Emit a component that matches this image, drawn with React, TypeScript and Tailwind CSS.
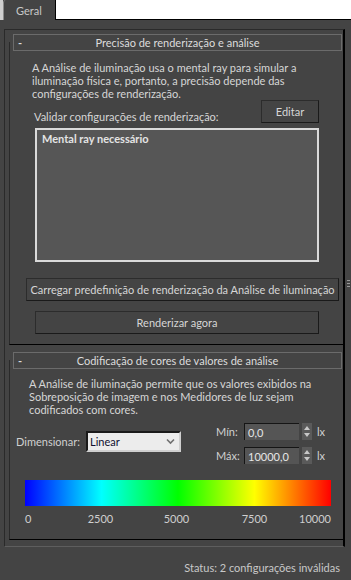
import React from 'react';

const font = { fontFamily: 'Lato, "Liberation Sans", sans-serif' };

function RolloutTitle({ title }: { title: string }) {
    return (
        <div className="relative -mt-[8px] ml-[3px] mr-[1px] h-[17px] border border-[#6b6b6b] bg-[#444] flex items-center text-[#dcdcdc]">
            <span className="w-[16px] pl-[4px] font-bold">-</span>
            <span className="flex-1 text-center pr-[16px]">{title}</span>
        </div>
    );
}

function Button({ label, className }: { label: string; className: string }) {
    return (
        <div className={`h-[23px] flex items-center justify-center whitespace-nowrap bg-[#444] border border-[#2c2c2c] border-b-[#1a1a1a] border-r-[#1a1a1a] text-[#d6d6d6] ${className}`}>
            {label}
        </div>
    );
}

function Spinner() {
    return (
        <div className="ml-[3px] w-[10px] h-[17px] bg-[#5a5a5a] flex flex-col items-center justify-center gap-[3px]">
            <div className="w-0 h-0 border-l-[3px] border-r-[3px] border-b-[4px] border-l-transparent border-r-transparent border-b-[#c8c8c8]" />
            <div className="w-0 h-0 border-l-[3px] border-r-[3px] border-t-[4px] border-l-transparent border-r-transparent border-t-[#c8c8c8]" />
        </div>
    );
}

function NumField({ label, value }: { label: string; value: string }) {
    return (
        <div className="flex items-center h-[17px]">
            <span className="w-[28px] text-[#d0d0d0]">{label}</span>
            <div className="w-[55px] h-[17px] bg-[#555] border-t border-l border-[#151515] border-b-[#5c5c5c] border-r-[#5c5c5c] pl-[3px] text-[#e6e6e6] flex items-center">
                {value}
            </div>
            <Spinner />
            <span className="ml-[5px] text-[#d0d0d0]">lx</span>
        </div>
    );
}

export default function App() {
    return (
        <div className="w-[351px] h-[580px] bg-[#444] overflow-hidden text-[11px] leading-[13px]" style={font}>
            {/* tab strip */}
            <div className="h-[20px] flex">
                <div className="w-[3px] bg-[#cfcfcf]" />
                <div className="w-[53px] h-[20px] bg-[#444] border-l border-r border-l-[#8a8a8a] border-r-black rounded-tl-[3px] flex items-center pl-[12px] text-[#c8c8c8]">
                    Geral
                </div>
                <div className="flex-1 bg-white border-b border-black" />
            </div>

            <div className="flex">
                <div className="w-[4px]" />
                {/* outer frame */}
                <div className="mt-[9px] w-[341px] border-l border-t border-b border-[#2a2a2a] border-b-[#5e5e5e] border-r-2 border-r-black pb-[6px]">
                    {/* Rollout 1 */}
                    <div className="mt-[12px] ml-[4px] flex flex-col border-l border-b border-l-[#2a2a2a] border-b-black">
                        <RolloutTitle title="Precisão de renderização e análise" />
                        <div className="mt-[10px] pl-[22px] text-[#d6d6d6]">
                            <div>A Análise de iluminação usa o mental ray para simular a</div>
                            <div>iluminação física e, portanto, a precisão depende das</div>
                            <div>configurações de renderização.</div>
                        </div>
                        <div className="h-[23px] flex items-end justify-between pl-[24px] pr-[24px] text-[#d6d6d6]">
                            <span>Validar configurações de renderização:</span>
                            <Button label="Editar" className="w-[58px]" />
                        </div>
                        <div className="mt-[5px] ml-[25px] w-[284px] h-[134px] border-2 border-[#dadada] bg-[#565656] pl-[5px] pt-[2px] font-bold text-[#e4e4e4]">
                            Mental ray necessário
                        </div>
                        <Button label="Carregar predefinição de renderização da Análise de iluminação" className="mt-[16px] ml-[16px] w-[313px]" />
                        <Button label="Renderizar agora" className="mt-[10px] ml-[25px] w-[284px]" />
                        <div className="h-[10px]" />
                    </div>

                    {/* Rollout 2 */}
                    <div className="mt-[15px] ml-[4px] flex flex-col border-l border-b border-l-[#2a2a2a] border-b-black">
                        <RolloutTitle title="Codificação de cores de valores de análise" />
                        <div className="mt-[8px] pl-[19px] text-[#d6d6d6]">
                            <div>A Análise de iluminação permite que os valores exibidos na</div>
                            <div>Sobreposição de imagem e nos Medidores de luz sejam</div>
                            <div>codificados com cores.</div>
                        </div>
                        <div className="mt-[7px] flex items-start">
                            <div className="mt-[8px] ml-[6px] flex items-center">
                                <span className="w-[70px] text-[#d0d0d0]">Dimensionar:</span>
                                <div className="w-[95px] h-[21px] bg-[#ececec] border-2 border-t-[#1a1a1a] border-l-[#1a1a1a] border-b-[#cfcfcf] border-r-[#cfcfcf] flex items-center justify-between pl-[2px] pr-[4px] text-[#101030]">
                                    <span>Linear</span>
                                    <svg width="9" height="7" viewBox="0 0 9 7">
                                        <path d="M1 1.5 L4.5 5 L8 1.5" stroke="#707070" strokeWidth="1.6" fill="none" />
                                    </svg>
                                </div>
                            </div>
                            <div className="ml-[35px] flex flex-col gap-[7px]">
                                <NumField label="Mín:" value="0,0" />
                                <NumField label="Máx:" value="10000,0" />
                            </div>
                        </div>
                        <div className="mt-[16px] ml-[15px] w-[306px] h-[26px] bg-[linear-gradient(to_right,#0000ff_0%,#00ffff_25%,#00ff00_50%,#ffff00_75%,#ff0000_100%)]" />
                        <div className="mt-[6px] ml-[15px] flex text-[#cfcfcf]">
                            <span className="w-[38px]">0</span>
                            <span className="w-[75px] text-center">2500</span>
                            <span className="w-[77px] text-center">5000</span>
                            <span className="w-[79px] text-center">7500</span>
                            <span className="w-[37px] text-right">10000</span>
                        </div>
                        <div className="h-[14px]" />
                    </div>
                </div>
                {/* grip column */}
                <div className="flex-1 flex flex-col items-center pt-[260px] gap-[2px]">
                    <div className="w-[3px] h-px bg-[#9a9a9a]" />
                    <div className="w-[3px] h-px bg-[#9a9a9a]" />
                    <div className="w-[3px] h-px bg-[#9a9a9a]" />
                </div>
            </div>

            <div className="mt-[14px] pr-[11px] text-right text-[#c8c8c8]">Status: 2 configurações inválidas</div>
        </div>
    );
}
